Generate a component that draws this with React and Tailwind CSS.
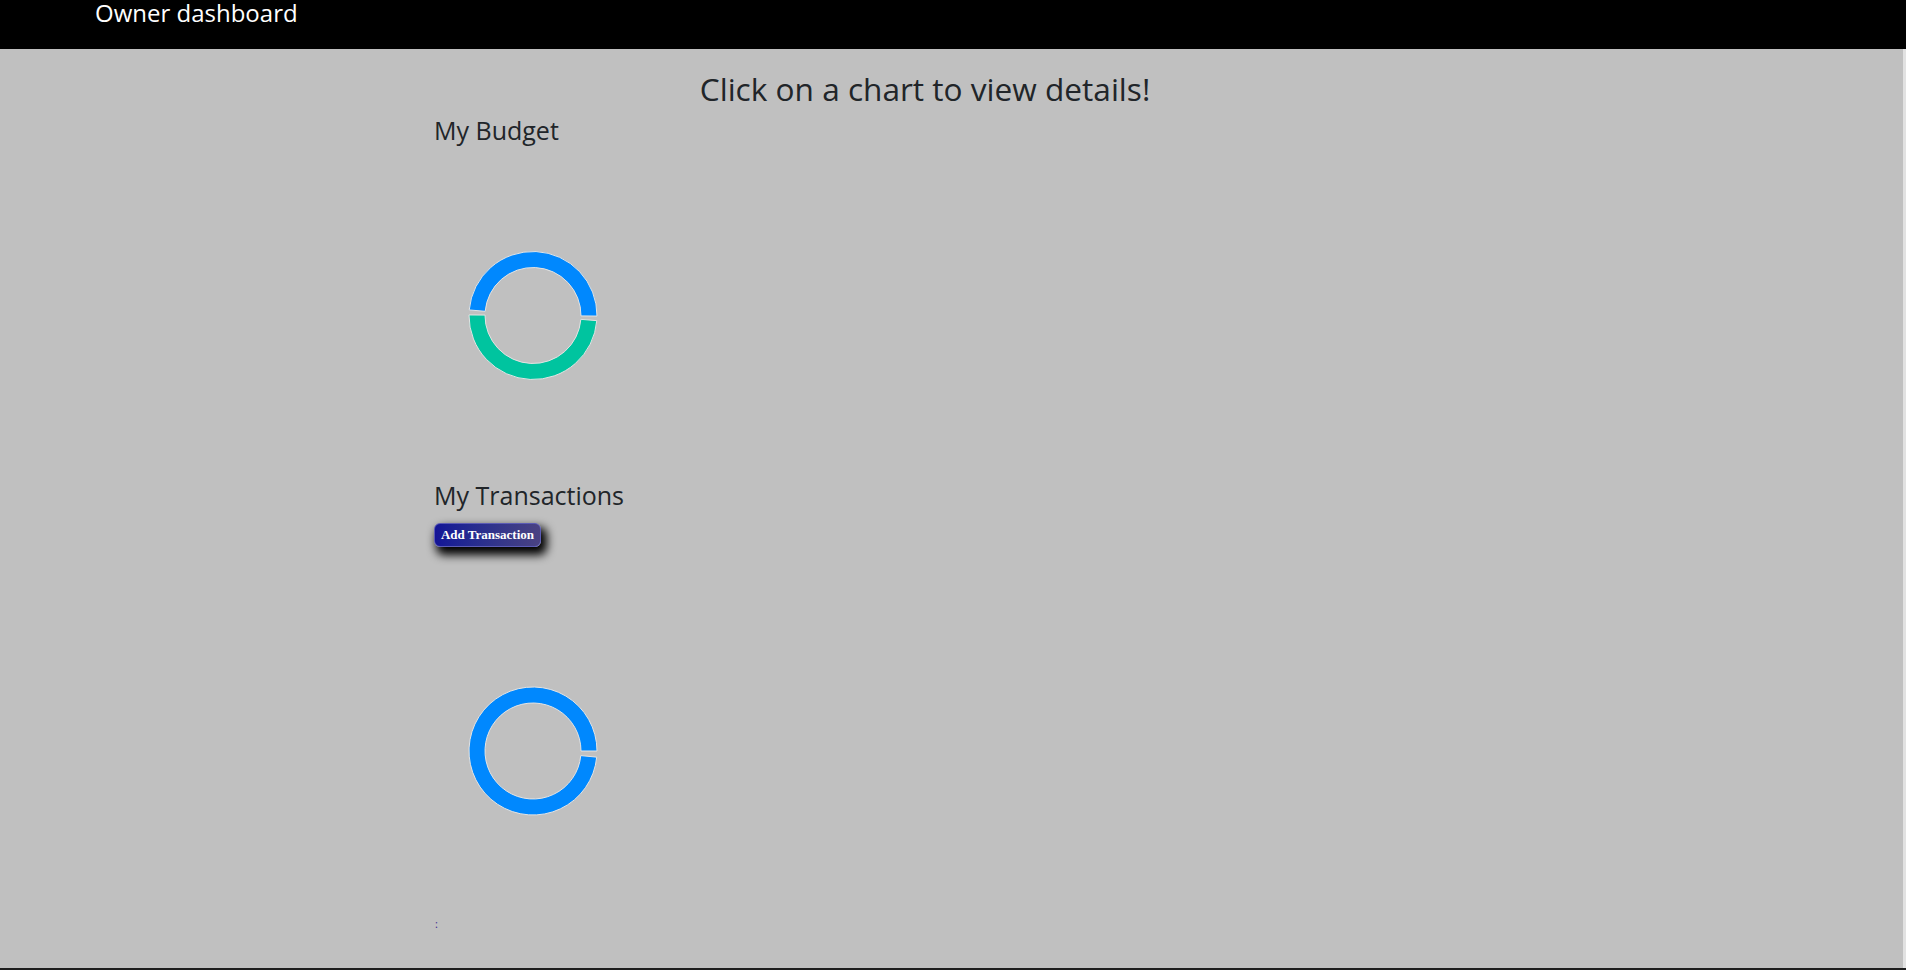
import React from "react";

const pt = (cx, cy, r, deg) => {
  const a = (deg * Math.PI) / 180;
  return [cx + r * Math.cos(a), cy + r * Math.sin(a)];
};

// ring segment from a0 to a1 (degrees, clockwise, 0 = right)
const arcPath = (cx, cy, ri, ro, a0, a1) => {
  const large = a1 - a0 > 180 ? 1 : 0;
  const [x1, y1] = pt(cx, cy, ro, a0);
  const [x2, y2] = pt(cx, cy, ro, a1);
  const [x3, y3] = pt(cx, cy, ri, a1);
  const [x4, y4] = pt(cx, cy, ri, a0);
  return `M${x1} ${y1} A${ro} ${ro} 0 ${large} 1 ${x2} ${y2} L${x3} ${y3} A${ri} ${ri} 0 ${large} 0 ${x4} ${y4} Z`;
};

const Donut = ({ slices, height, cy }) => (
  <svg width="200" height={height} className="block">
    {slices.map((s, i) => (
      <path
        key={i}
        d={arcPath(99, cy, 48, 64, s.from, s.to)}
        fill={s.color}
        stroke="#e4e4e4"
        strokeWidth="1"
      />
    ))}
  </svg>
);

const budget = [
  { from: 185, to: 360.5, color: "#0088FE" },
  { from: 4.6, to: 180.5, color: "#00C49F" },
];

const transactions = [{ from: 5.5, to: 360, color: "#0088FE" }];

export default function App() {
  return (
    <div
      className="h-[970px] flex flex-col overflow-hidden bg-[#c0c0c0] text-[#212529]"
      style={{ fontFamily: '"Open Sans", sans-serif' }}
    >
      <div className="h-[49px] shrink-0 bg-black pl-[95px] pt-[1px]">
        <span className="text-white text-[24px] leading-none">Owner dashboard</span>
      </div>
      <div className="flex-1 border-r-[3px] border-[#e2e2e2]">
        <div className="ml-[434px] w-[982px] pt-[21px]">
          <h2 className="text-center text-[31.6px] leading-[1.2] font-medium">
            Click on a chart to view details!
          </h2>
          <h3 className="mt-[7px] text-[25px] leading-[1.2] font-medium">My Budget</h3>
          <Donut slices={budget} height={328} cy={170.5} />
          <h3 className="mt-[7px] text-[25px] leading-[1.2] font-medium">My Transactions</h3>
          <button
            className="mt-[13px] w-[107px] h-[24px] flex items-center justify-center rounded-[6px] border border-[#5b5bb5] bg-gradient-to-r from-[#141496] to-[#4a4282] text-white text-[13px] font-bold shadow-[4px_6px_10px_2px_#000]"
            style={{ fontFamily: '"Liberation Serif", serif' }}
          >
            Add Transaction
          </button>
          <Donut slices={transactions} height={360} cy={204} />
          <div className="mt-[11px] text-[11px] leading-none text-[#3b2b8f] pl-[1px]">:</div>
        </div>
      </div>
      <div className="h-[2px] shrink-0 bg-[#1e1e1e]" />
    </div>
  );
}
